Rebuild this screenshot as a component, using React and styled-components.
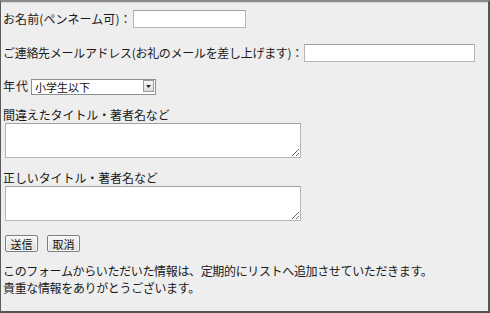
import React from 'react'
import styled, { createGlobalStyle } from 'styled-components'

const GlobalStyle = createGlobalStyle`
  html, body {
    margin: 0;
    padding: 0;
    background: #eeeeee;
  }
  * {
    box-sizing: border-box;
  }
`

const App = () => {
  return (
    <>
      <GlobalStyle />
      <Frame>
        <Row>
          <Label $spacing={0.1}>お名前(ペンネーム可)：</Label>
          <TextInput type="text" $width={113} />
        </Row>
        <Row>
          <Label $spacing={-0.3}>ご連絡先メールアドレス(お礼のメールを差し上げます)：</Label>
          <TextInput type="text" $width={171} />
        </Row>
        <Row $height={16} $gap={13}>
          <Label $spacing={1}>年代</Label>
          <SelectWrap>
            <Select defaultValue="1">
              <option value="1">小学生以下</option>
              <option value="2">中学生</option>
              <option value="3">高校生</option>
            </Select>
            <Arrow>
              <svg width="5" height="3" viewBox="0 0 5 3">
                <path d="M0 0h5L2.5 3z" fill="#222" />
              </svg>
            </Arrow>
          </SelectWrap>
        </Row>
        <Field>
          <Label>間違えたタイトル・著者名など</Label>
          <TextArea />
        </Field>
        <Field $gap={12}>
          <Label>正しいタイトル・著者名など</Label>
          <TextArea />
        </Field>
        <Buttons>
          <Button type="button">送信</Button>
          <Button type="button">取消</Button>
        </Buttons>
        <Note>
          このフォームからいただいた情報は、定期的にリストへ追加させていただきます。
          <br />
          貴重な情報をありがとうございます。
        </Note>
      </Frame>
    </>
  )
}

export default App

const Frame = styled.div`
  width: 490px;
  height: 313px;
  background: #eeeeee;
  border-top: 2px solid #8c8c8c;
  border-left: 1px solid #5a5a5a;
  border-right: 2px solid #555555;
  border-bottom: 2px solid #555555;
  box-shadow: inset 0 1px 0 #d4d4d4;
  padding: 8px 0 0 2px;
  font-family: "Noto Sans CJK JP", "Noto Sans", sans-serif;
  font-size: 12px;
  color: #1a1a1a;
  display: flex;
  flex-direction: column;
`

const Row = styled.div`
  display: flex;
  align-items: center;
  height: ${p => p.$height || 18}px;
  margin-bottom: ${p => p.$gap || 16}px;
`

const Label = styled.span`
  line-height: 16px;
  white-space: nowrap;
  letter-spacing: ${p => p.$spacing ?? -0.1}px;
`

const TextInput = styled.input`
  width: ${p => p.$width}px;
  height: 18px;
  margin: 0 0 0 1px;
  padding: 0 2px;
  border: 1px solid #b5b5b5;
  border-top-color: #a0a0a0;
  background: #fff;
  outline: none;
  font: inherit;
`

const SelectWrap = styled.div`
  position: relative;
  width: 125px;
  height: 16px;
  margin-left: 2px;
`

const Select = styled.select`
  appearance: none;
  width: 100%;
  height: 100%;
  margin: 0;
  padding: 0 0 0 3px;
  border: 1px solid #8e8e8e;
  background: #fff;
  font-family: "Noto Sans CJK JP", sans-serif;
  font-size: 11px;
  line-height: 14px;
  color: #111;
  outline: none;
`

const Arrow = styled.span`
  position: absolute;
  top: 2px;
  right: 2px;
  width: 11px;
  height: 12px;
  border: 1px solid #9a9a9a;
  background: linear-gradient(#f6f6f6, #dcdcdc);
  display: flex;
  align-items: center;
  justify-content: center;
  pointer-events: none;
`

const Field = styled.div`
  display: flex;
  flex-direction: column;
  margin-top: ${p => p.$gap || 0}px;
`

const TextArea = styled.textarea`
  width: 296px;
  height: 35px;
  margin: 0 0 0 2px;
  padding: 2px;
  border: 1px solid #b5b5b5;
  border-top-color: #a0a0a0;
  background: #fff;
  outline: none;
  font: inherit;
  display: block;
`

const Buttons = styled.div`
  display: flex;
  gap: 9px;
  margin: 14px 0 0 2px;
`

const Button = styled.button`
  width: 33px;
  height: 17px;
  padding: 0;
  border: 1px solid #7d7d7d;
  border-radius: 2px;
  background: linear-gradient(#f7f7f7, #dedede);
  box-shadow: inset 0 0 0 1px #fafafa;
  font-family: "Noto Sans CJK JP", sans-serif;
  font-size: 11px;
  line-height: 14px;
  color: #111;
`

const Note = styled.p`
  margin: 10px 0 0 0;
  line-height: 17px;
  letter-spacing: -0.35px;
`
